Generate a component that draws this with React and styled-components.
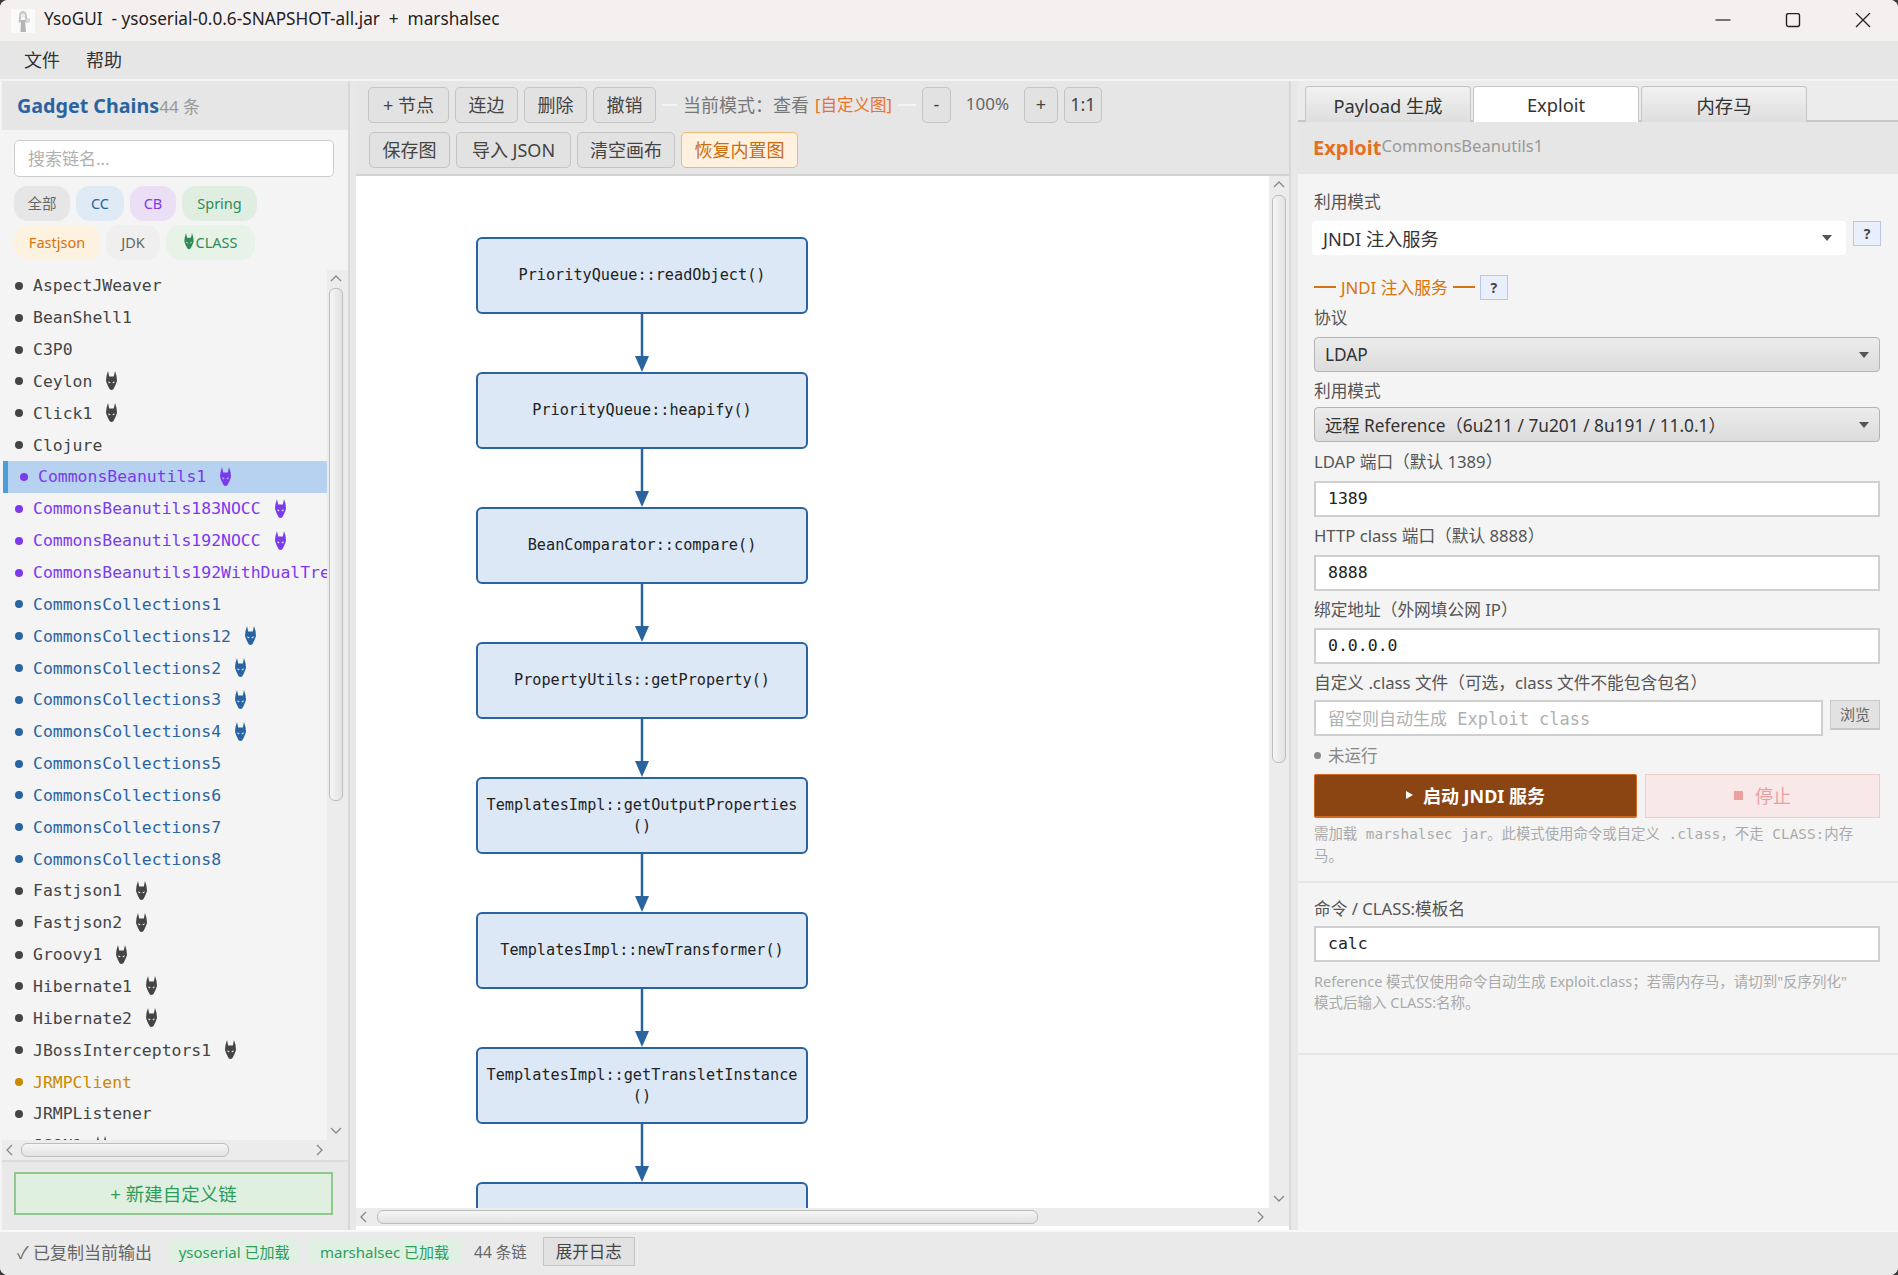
import React from "react";
import styled, { createGlobalStyle } from "styled-components";

const UI = `"Noto Sans", "Noto Sans CJK SC", sans-serif`;
const MONO = `"DejaVu Sans Mono", "Noto Sans CJK SC", monospace`;

const Global = createGlobalStyle`
html, body { margin: 0; padding: 0; background: #3a3a3a; }
* { box-sizing: border-box; }
body { font-family: ${UI}; color: #444; overflow: hidden; }
`;

const Win = styled.div`
display: flex;
flex-direction: column;
width: 100vw;
height: 100vh;
background: #f4f4f4;
border-radius: 8px;
overflow: hidden;
`;

const TitleBar = styled.div`
display: flex;
align-items: center;
height: 41px;
flex: none;
background: #f5f0f0;
padding-left: 11px;
font-size: 17.2px;
color: #222;
`;
const Logo = styled.svg`
width: 24px;
height: 24px;
margin-right: 9px;
`;
const TitleText = styled.span`
white-space: pre;
flex: 1;
padding-bottom: 4px;
`;
const WinBtn = styled.button`
width: 70px;
height: 41px;
border: 0;
background: none;
padding: 0;
display: flex;
align-items: center;
justify-content: center;
`;

const MenuBar = styled.div`
display: flex;
align-items: center;
height: 38px;
flex: none;
background: #e6e6e6;
padding: 0 0 3px 24px;
gap: 26px;
font-size: 18px;
color: #333;
`;

const Main = styled.div`
flex: 1;
min-height: 0;
display: flex;
padding: 2px 0 0 2px;
background: #f4f4f4;
`;

const Splitter = styled.div`
width: ${(p) => p.$w}px;
flex: none;
background: #e8e8e8;
border-left: 2px solid #d8d8d8;
`;

const Left = styled.aside`
width: 346px;
flex: none;
display: flex;
flex-direction: column;
background: #f4f4f4;
`;
const LeftHead = styled.div`
height: 49px;
flex: none;
background: #e6e6e6;
display: flex;
align-items: center;
padding-left: 15px;
`;
const LeftTitle = styled.span`
font-size: 19.7px;
font-weight: 700;
color: #2a64a0;
`;
const Count = styled.span`
font-size: 17px;
color: #999;
`;
const Search = styled.input`
display: block;
margin: 10px 12px 0 12px;
width: 320px;
height: 37px;
border: 1.5px solid #ccc;
border-radius: 5px;
background: #fff;
padding: 0 13px;
font: 17px ${UI};
&::placeholder { color: #b0b0b0; }
`;
const ChipRow = styled.div`
display: flex;
gap: 6px;
margin: ${(p) => p.$top}px 0 0 12px;
`;
const Chip = styled.span`
display: flex;
align-items: center;
justify-content: center;
gap: 1px;
height: 35px;
padding-bottom: 2px;
border-radius: 14px;
width: ${(p) => p.$w}px;
background: ${(p) => p.$bg};
color: ${(p) => p.$fg};
font-size: 14.5px;
`;
const ListWrap = styled.div`
flex: 1;
min-height: 0;
display: flex;
margin-top: 10px;
`;
const List = styled.ul`
list-style: none;
margin: 0;
padding: 0 0 0 1px;
flex: none;
width: 325px;
overflow: hidden;
`;
const Row = styled.li`
display: flex;
align-items: center;
height: 31.85px;
padding-left: 12px;
color: ${(p) => p.$c};
font: 16.45px ${MONO};
white-space: nowrap;
background: ${(p) => (p.$sel ? "#b6d2f0" : "transparent")};
border-left: ${(p) => (p.$sel ? "5px solid #4a9fd8" : "0")};
`;
const Dot = styled.i`
width: 8px;
height: 8px;
border-radius: 50%;
background: currentColor;
margin-right: 10px;
flex: none;
`;
const Bug = styled.svg`
width: 11px;
height: 20px;
margin-left: 14px;
flex: none;
`;
const SmallBug = styled(Bug)`
width: 10px;
height: 17px;
margin: 0 1px 0 0;
`;

const VBar = styled.div`
width: ${(p) => p.$w}px;
flex: none;
display: flex;
flex-direction: column;
align-items: center;
background: #ececec;
`;
const HBar = styled.div`
height: ${(p) => p.$h}px;
flex: none;
display: flex;
align-items: center;
background: #ececec;
`;
const ArrowBtn = styled.span`
flex: none;
display: flex;
align-items: center;
justify-content: center;
width: 18px;
height: 18px;
`;
const Track = styled.div`
flex: 1;
min-width: 0;
min-height: 0;
display: flex;
flex-direction: ${(p) => (p.$v ? "column" : "row")};
align-items: center;
`;
const VThumb = styled.div`
width: 14px;
height: ${(p) => p.$len}px;
margin-top: ${(p) => p.$off}px;
border: 1px solid #bdbdbd;
border-radius: 6px;
background: linear-gradient(90deg, #f6f6f6, #e2e2e2);
`;
const HThumb = styled.div`
height: 14px;
width: ${(p) => p.$len}px;
margin-left: ${(p) => p.$off}px;
border: 1px solid #bdbdbd;
border-radius: 6px;
background: linear-gradient(#f6f6f6, #e2e2e2);
`;

const LeftFoot = styled.div`
height: 70px;
flex: none;
background: #e9e9e9;
border-top: 2px solid #dcdcdc;
padding: 10px 12px 0 12px;
`;
const NewChain = styled.button`
width: 319px;
height: 43px;
background: #dff0e0;
border: 2px solid #8fc78f;
color: #2f9d5a;
font: 18.5px ${UI};
padding: 0 0 1px;
`;

const Center = styled.section`
flex: 1;
min-width: 0;
display: flex;
flex-direction: column;
`;
const Tools = styled.div`
flex: none;
height: 95px;
background: #e6e6e6;
border-bottom: 2px solid #d4d4d4;
padding: 6px 0 0 12px;
display: flex;
flex-direction: column;
gap: 9px;
`;
const ToolRow = styled.div`
display: flex;
align-items: center;
gap: 6px;
height: 36px;
margin-left: ${(p) => p.$left || 0}px;
`;
const Btn = styled.button`
height: 36px;
width: ${(p) => p.$w}px;
padding: 0 0 3px;
flex: none;
border: 1.5px solid #c4c4c4;
border-radius: 5px;
background: ${(p) => (p.$warm ? "#fff1e0" : "#e2e2e2")};
border-color: ${(p) => (p.$warm ? "#f0b878" : "#c4c4c4")};
color: ${(p) => (p.$warm ? "#c96c10" : "#444")};
font: 18px ${UI};
`;
const Sep = styled.span`
width: ${(p) => p.$w}px;
height: 2px;
background: #f4f4f4;
flex: none;
`;
const ModeText = styled.span`
font-size: 18px;
color: #777;
flex: none;
margin-bottom: 3px;
`;
const CustomTag = styled.span`
font-size: 16.5px;
color: #e8722a;
margin: 0 0 3px 0;
flex: none;
`;
const Zoom = styled.span`
font-size: 17px;
color: #666;
width: 61px;
text-align: center;
flex: none;
margin-bottom: 3px;
`;

const CanvasWrap = styled.div`
flex: 1;
min-height: 0;
display: flex;
flex-direction: column;
background: #fff;
padding-bottom: 4px;
`;
const CanvasTop = styled.div`
flex: 1;
min-height: 0;
display: flex;
`;
const Canvas = styled.div`
flex: 1;
min-width: 0;
overflow: hidden;
padding: 61px 0 0 120px;
`;
const Node = styled.div`
width: 332px;
height: 77px;
display: flex;
align-items: center;
justify-content: center;
text-align: center;
white-space: pre-line;
background: #dce8f6;
border: 2.5px solid #2a64a0;
border-radius: 6px;
color: #222;
font: 15.2px/21px ${MONO};
`;
const Arrow = styled.svg`
display: block;
width: 332px;
height: 58px;
`;

const Right = styled.aside`
width: 600px;
flex: none;
display: flex;
flex-direction: column;
background: #f4f4f4;
`;
const TabBar = styled.div`
flex: none;
height: 41px;
padding: 5px 0 0 7px;
display: flex;
gap: 2px;
background: #ececec;
border-bottom: 2px solid #c8c8c8;
`;
const Tab = styled.div`
width: 166px;
height: 36px;
display: flex;
align-items: center;
justify-content: center;
font-size: 18.3px;
color: #333;
border: 1px solid #c4c4c4;
border-bottom: 0;
border-radius: 4px 4px 0 0;
background: ${(p) => (p.$on ? "#fff" : "linear-gradient(#f2f2f2, #dedede)")};
`;
const RightHead = styled.div`
flex: none;
height: 52px;
background: #e6e6e6;
display: flex;
padding: 12px 0 0 15px;
`;
const ExploitTitle = styled.span`
font-size: 20px;
font-weight: 700;
color: #e4701e;
`;
const ExploitName = styled.span`
font-size: 16.6px;
color: #999;
`;
const Body = styled.div`
flex: 1;
min-height: 0;
padding: 0 18px 0 16px;
`;
const Label = styled.div`
font-size: 16.7px;
line-height: 20px;
color: #555;
margin-top: ${(p) => p.$top}px;
white-space: nowrap;
`;
const FlexRow = styled.div`
display: flex;
align-items: flex-start;
gap: ${(p) => p.$gap || 0}px;
margin-top: ${(p) => p.$top || 0}px;
`;
const WhiteSelect = styled.div`
flex: none;
width: 534px;
margin-left: -2px;
height: 34px;
background: #fff;
border-radius: 4px;
display: flex;
align-items: center;
justify-content: space-between;
padding: 0 14px 0 11px;
font-size: 18.2px;
color: #333;
`;
const GraySelect = styled.div`
height: 35px;
margin-top: ${(p) => p.$top}px;
background: linear-gradient(#ececec, #dcdcdc);
border: 1.5px solid #b4b4b4;
border-radius: 4px;
display: flex;
align-items: center;
justify-content: space-between;
padding: 0 10px;
font-size: 17.3px;
color: #333;
`;
const Caret = styled.i`
width: 0;
height: 0;
border-left: 5.5px solid transparent;
border-right: 5.5px solid transparent;
border-top: 6px solid #555;
`;
const Help = styled.button`
width: 28px;
height: 25px;
padding: 0;
flex: none;
background: #eaf0fb;
border: 1.5px solid #b8c8e8;
color: #444;
font: bold 14px ${UI};
`;
const JndiHead = styled.div`
display: flex;
align-items: center;
gap: 5px;
margin-top: 20px;
color: #d9730d;
font-size: 16.8px;
height: 24px;
white-space: pre;
`;
const Dash = styled.i`
width: 22px;
height: 2px;
background: #d9730d;
`;
const TextInput = styled.div`
flex: ${(p) => (p.$grow ? 1 : "none")};
height: 36px;
margin-top: ${(p) => p.$top || 0}px;
background: #fff;
border: 2px solid #cfcfcf;
display: flex;
align-items: center;
padding: 0 12px 2px;
font: ${(p) => (p.$ph ? 17 : 16.5)}px ${MONO};
color: ${(p) => (p.$ph ? "#b0b0b0" : "#222")};
white-space: nowrap;
`;
const Browse = styled.button`
width: 50px;
height: 30px;
padding: 0 0 2px;
flex: none;
background: #e2e2e2;
border: 1.5px solid #c8c8c8;
border-bottom-width: 2px;
color: #666;
font: 15px ${UI};
`;
const Status = styled.div`
display: flex;
align-items: center;
gap: 7px;
margin-top: 9px;
height: 20px;
color: #888;
font-size: 16.5px;
`;
const GrayDot = styled.i`
width: 7px;
height: 7px;
border-radius: 50%;
background: #888;
`;
const StartBtn = styled.button`
width: 323px;
height: 44px;
flex: none;
background: #8b4513;
border: 1.5px solid #d2691e;
border-bottom-width: 2.5px;
border-radius: 2px;
color: #fff;
font: bold 18px ${UI};
display: flex;
align-items: center;
justify-content: center;
gap: 10px;
padding: 0 0 2px;
`;
const StopBtn = styled.button`
width: 235px;
height: 44px;
flex: none;
background: #f8e8e8;
border: 1.5px solid #f0cccc;
color: #eaa0a0;
font: 18px ${UI};
display: flex;
align-items: center;
justify-content: center;
gap: 12px;
padding: 0 0 2px;
`;
const Tri = styled.i`
width: 0;
height: 0;
border-top: 4.5px solid transparent;
border-bottom: 4.5px solid transparent;
border-left: 7px solid #fff;
`;
const Sq = styled.i`
width: 9px;
height: 9px;
background: #eaa0a0;
`;
const Hint = styled.div`
font: ${(p) => (p.$mono ? `14.4px/22px ${MONO}` : `14.5px/21px ${UI}`)};
color: #aaa;
margin-top: ${(p) => p.$top}px;
white-space: nowrap;
`;
const Rule = styled.div`
height: 2px;
background: #e6e6e6;
margin: ${(p) => p.$top}px -18px 0 -16px;
`;

const StatusBar = styled.footer`
flex: none;
height: 45px;
display: flex;
align-items: center;
background: #eaeaea;
border-top: 2px solid #f8f8f8;
padding: 0 0 4px 17px;
font-size: 17px;
color: #666;
white-space: pre;
`;
const Loaded = styled.span`
display: flex;
align-items: center;
height: 23px;
width: ${(p) => p.$w}px;
justify-content: center;
margin-left: ${(p) => p.$left}px;
background: #e0f0e3;
border-radius: 3px;
color: #2f9d5a;
font-size: 15px;
`;
const ChainCount = styled.span`
font-size: 15.5px;
margin-left: 12px;
`;
const LogBtn = styled.button`
width: 92px;
height: 29px;
margin-left: 16px;
padding: 0 0 2px;
background: #e2e2e2;
border: 1.5px solid #c4c4c4;
color: #444;
font: 16.5px ${UI};
`;

const bugPath =
  "M2 0 L3.2 5.5 L7.8 5.5 L9 0 L10.5 5 L11 10 L9.5 14 L7.5 18 Q5.5 20 3.5 18 L1.5 14 L0 10 L.5 5Z M2.4 10 L4.8 12 L2.8 12.2Z M8.6 10 L6.2 12 L8.2 12.2Z";

function DragonBug({ small }) {
  const Cmp = small ? SmallBug : Bug;
  return (
    <Cmp viewBox="0 0 11 20">
      <path d={bugPath} fill="currentColor" fillRule="evenodd" />
    </Cmp>
  );
}

const DARK = "#444";
const CB = "#7c3aed";
const CC = "#2a64a0";
const chains = [
  ["AspectJWeaver", DARK],
  ["BeanShell1", DARK],
  ["C3P0", DARK],
  ["Ceylon", DARK, 1],
  ["Click1", DARK, 1],
  ["Clojure", DARK],
  ["CommonsBeanutils1", CB, 1, 1],
  ["CommonsBeanutils183NOCC", CB, 1],
  ["CommonsBeanutils192NOCC", CB, 1],
  ["CommonsBeanutils192WithDualTreeBidiMap", CB],
  ["CommonsCollections1", CC],
  ["CommonsCollections12", CC, 1],
  ["CommonsCollections2", CC, 1],
  ["CommonsCollections3", CC, 1],
  ["CommonsCollections4", CC, 1],
  ["CommonsCollections5", CC],
  ["CommonsCollections6", CC],
  ["CommonsCollections7", CC],
  ["CommonsCollections8", CC],
  ["Fastjson1", DARK, 1],
  ["Fastjson2", DARK, 1],
  ["Groovy1", DARK, 1],
  ["Hibernate1", DARK, 1],
  ["Hibernate2", DARK, 1],
  ["JBossInterceptors1", DARK, 1],
  ["JRMPClient", "#c98a00"],
  ["JRMPListener", DARK],
  ["JSON1", DARK, 1],
];

const nodes = [
  "PriorityQueue::readObject()",
  "PriorityQueue::heapify()",
  "BeanComparator::compare()",
  "PropertyUtils::getProperty()",
  "TemplatesImpl::getOutputProperties\n()",
  "TemplatesImpl::newTransformer()",
  "TemplatesImpl::getTransletInstance\n()",
  "",
];

function Chev({ dir }) {
  const d = {
    up: "M2 8 L7 3 L12 8",
    down: "M2 3 L7 8 L12 3",
    left: "M8 1 L3 6 L8 11",
    right: "M3 1 L8 6 L3 11",
  }[dir];
  return (
    <svg width="14" height="12" viewBox="0 0 14 12">
      <path d={d} fill="none" stroke="#888" strokeWidth="1.3" />
    </svg>
  );
}

function NodeArrow() {
  return (
    <Arrow viewBox="0 0 332 58">
      <line x1="166" y1="0" x2="166" y2="44" stroke="#2a64a0" strokeWidth="2.5" />
      <path d="M159 42 L173 42 L166 58Z" fill="#2a64a0" />
    </Arrow>
  );
}

export default function App() {
  return (
    <Win>
      <Global />
      <TitleBar>
        <Logo viewBox="0 0 24 24">
          <rect width="24" height="24" fill="#fafafa" />
          <path d="M8 8 Q8 2 12 2 Q16 2 16 8 L16.5 14 L14 13 L14 8 L10 8 L10 13 L7.5 14Z" fill="#c4c4c4" />
          <circle cx="12" cy="6.5" r="2.2" fill="#eee" />
          <path d="M10 11 L14 11 L15 23 L9.5 23Z" fill="#b4b4b4" />
          <path d="M15 10 L19 9 L19 13 L15.5 14Z" fill="#d8d8d8" />
        </Logo>
        <TitleText>YsoGUI  - ysoserial-0.0.6-SNAPSHOT-all.jar  +  marshalsec</TitleText>
        <WinBtn>
          <svg width="16" height="16" viewBox="0 0 16 16">
            <line x1="0.5" y1="7" x2="15.5" y2="7" stroke="#222" strokeWidth="1.2" />
          </svg>
        </WinBtn>
        <WinBtn>
          <svg width="16" height="16" viewBox="0 0 16 16">
            <rect x="1.5" y="0.5" width="13" height="13" rx="2" fill="none" stroke="#222" strokeWidth="1.4" />
          </svg>
        </WinBtn>
        <WinBtn>
          <svg width="16" height="16" viewBox="0 0 16 16">
            <path d="M1 0 L15 14 M15 0 L1 14" stroke="#222" strokeWidth="1.3" />
          </svg>
        </WinBtn>
      </TitleBar>
      <MenuBar>
        <span>文件</span>
        <span>帮助</span>
      </MenuBar>
      <Main>
        <Left>
          <LeftHead>
            <LeftTitle>Gadget Chains</LeftTitle>
            <Count>44 条</Count>
          </LeftHead>
          <Search placeholder="搜索链名..." />
          <ChipRow $top={9}>
            <Chip $w={56} $bg="#e6e6e6" $fg="#666">全部</Chip>
            <Chip $w={48} $bg="#dfeaf5" $fg="#2a64a0">CC</Chip>
            <Chip $w={46} $bg="#ebdff5" $fg="#7c3aed">CB</Chip>
            <Chip $w={75} $bg="#e0eee2" $fg="#2e8b57">Spring</Chip>
          </ChipRow>
          <ChipRow $top={4}>
            <Chip $w={86} $bg="#fdf1e0" $fg="#d9730d">Fastjson</Chip>
            <Chip $w={54} $bg="#efefef" $fg="#666">JDK</Chip>
            <Chip $w={89} $bg="#e8f3e8" $fg="#2e8b57"><DragonBug small />CLASS</Chip>
          </ChipRow>
          <ListWrap>
            <List>
              {chains.map(([name, color, bug, sel]) => (
                <Row key={name} $c={color} $sel={sel}>
                  <Dot />
                  {name}
                  {bug ? <DragonBug /> : null}
                </Row>
              ))}
            </List>
            <VBar $w={18}>
              <ArrowBtn><Chev dir="up" /></ArrowBtn>
              <Track $v>
                <VThumb $len={513} $off={0} />
              </Track>
              <ArrowBtn><Chev dir="down" /></ArrowBtn>
            </VBar>
            <VBar $w={3} />
          </ListWrap>
          <HBar $h={20}>
            <ArrowBtn><Chev dir="left" /></ArrowBtn>
            <Track>
              <HThumb $len={208} $off={1} />
            </Track>
            <ArrowBtn><Chev dir="right" /></ArrowBtn>
            <ArrowBtn />
          </HBar>
          <LeftFoot>
            <NewChain>+ 新建自定义链</NewChain>
          </LeftFoot>
        </Left>
        <Splitter $w={8} />
        <Center>
          <Tools>
            <ToolRow>
              <Btn $w={81}>+ 节点</Btn>
              <Btn $w={63}>连边</Btn>
              <Btn $w={63}>删除</Btn>
              <Btn $w={63}>撤销</Btn>
              <Sep $w={15} />
              <ModeText>当前模式：查看</ModeText>
              <CustomTag>[自定义图]</CustomTag>
              <Sep $w={18} />
              <Btn $w={29}>-</Btn>
              <Zoom>100%</Zoom>
              <Btn $w={34}>+</Btn>
              <Btn $w={38}>1:1</Btn>
            </ToolRow>
            <ToolRow $left={1}>
              <Btn $w={81}>保存图</Btn>
              <Btn $w={115}>导入 JSON</Btn>
              <Btn $w={98}>清空画布</Btn>
              <Btn $w={117} $warm>恢复内置图</Btn>
            </ToolRow>
          </Tools>
          <CanvasWrap>
            <CanvasTop>
              <Canvas>
                {nodes.map((n, i) => (
                  <React.Fragment key={i}>
                    <Node>{n}</Node>
                    {i < nodes.length - 1 ? <NodeArrow /> : null}
                  </React.Fragment>
                ))}
              </Canvas>
              <VBar $w={20}>
                <ArrowBtn><Chev dir="up" /></ArrowBtn>
                <Track $v>
                  <VThumb $len={568} $off={1} />
                </Track>
                <ArrowBtn><Chev dir="down" /></ArrowBtn>
              </VBar>
            </CanvasTop>
            <HBar $h={18}>
              <ArrowBtn><Chev dir="left" /></ArrowBtn>
              <Track>
                <HThumb $len={661} $off={3} />
              </Track>
              <ArrowBtn><Chev dir="right" /></ArrowBtn>
              <ArrowBtn />
            </HBar>
          </CanvasWrap>
        </Center>
        <Splitter $w={9} />
        <Right>
          <TabBar>
            <Tab>Payload 生成</Tab>
            <Tab $on>Exploit</Tab>
            <Tab>内存马</Tab>
          </TabBar>
          <RightHead>
            <ExploitTitle>Exploit</ExploitTitle>
            <ExploitName>CommonsBeanutils1</ExploitName>
          </RightHead>
          <Body>
            <Label $top={18}>利用模式</Label>
            <FlexRow $top={9} $gap={7}>
              <WhiteSelect>
                JNDI 注入服务
                <Caret />
              </WhiteSelect>
              <Help>?</Help>
            </FlexRow>
            <JndiHead>
              <Dash />
              JNDI 注入服务
              <Dash />
              <Help>?</Help>
            </JndiHead>
            <Label $top={9}>协议</Label>
            <GraySelect $top={9}>LDAP<Caret /></GraySelect>
            <Label $top={9}>利用模式</Label>
            <GraySelect $top={6}>远程 Reference（6u211 / 7u201 / 8u191 / 11.0.1）<Caret /></GraySelect>
            <Label $top={10}>LDAP 端口（默认 1389）</Label>
            <TextInput $top={9}>1389</TextInput>
            <Label $top={9}>HTTP class 端口（默认 8888）</Label>
            <TextInput $top={9}>8888</TextInput>
            <Label $top={9}>绑定地址（外网填公网 IP）</Label>
            <TextInput $top={8}>0.0.0.0</TextInput>
            <Label $top={9}>自定义 .class 文件（可选，class 文件不能包含包名）</Label>
            <FlexRow $top={7} $gap={7}>
              <TextInput $grow $ph>留空则自动生成 Exploit class</TextInput>
              <Browse>浏览</Browse>
            </FlexRow>
            <Status><GrayDot />未运行</Status>
            <FlexRow $top={9} $gap={8}>
              <StartBtn><Tri />启动 JNDI 服务</StartBtn>
              <StopBtn><Sq />停止</StopBtn>
            </FlexRow>
            <Hint $mono $top={5}>
              需加载 marshalsec jar。此模式使用命令或自定义 .class，不走 CLASS:内存
              <br />
              马。
            </Hint>
            <Rule $top={14} />
            <Label $top={16}>命令 / CLASS:模板名</Label>
            <TextInput $top={7}>calc</TextInput>
            <Hint $top={9}>
              Reference 模式仅使用命令自动生成 Exploit.class；若需内存马，请切到"反序列化"
              <br />
              模式后输入 CLASS:名称。
            </Hint>
            <Rule $top={40} />
          </Body>
        </Right>
      </Main>
      <StatusBar>
        ✓ 已复制当前输出
        <Loaded $w={130} $left={17}>ysoserial 已加载</Loaded>
        <Loaded $w={155} $left={8}>marshalsec 已加载</Loaded>
        <ChainCount>44 条链</ChainCount>
        <LogBtn>展开日志</LogBtn>
      </StatusBar>
    </Win>
  );
}
